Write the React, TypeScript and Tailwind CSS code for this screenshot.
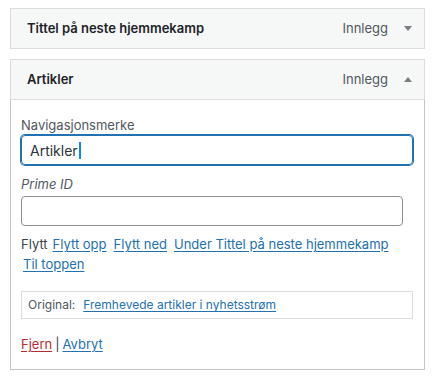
import React from "react";

const font = { fontFamily: "Inter, 'Noto Sans', sans-serif" };

const Arrow = ({ up }: { up?: boolean }) => (
  <svg width="8" height="5" viewBox="0 0 8 5" className="ml-4">
    {up ? <polygon points="0,5 8,5 4,0" fill="#787c82" /> : <polygon points="0,0 8,0 4,5" fill="#787c82" />}
  </svg>
);

const Header = ({ title, up }: { title: string; up?: boolean }) => (
  <div className="flex h-[41px] items-center border border-[#dcdcde] bg-[#f6f7f7] pl-4 pr-[12px]">
    <span className="flex-1 text-[13px] font-semibold text-[#1d2327]">{title}</span>
    <span className="text-[13px] text-[#50575e]">Innlegg</span>
    <Arrow up={up} />
  </div>
);

const A = ({ children, className = "" }: { children: React.ReactNode; className?: string }) => (
  <a href="#" className={`text-[#2271b1] underline underline-offset-2 ${className}`}>
    {children}
  </a>
);

export default function App() {
  return (
    <div className="h-[376px] w-[435px] bg-white px-[10px] pt-2" style={font}>
      <Header title="Tittel på neste hjemmekamp" />
      <div className="mt-[10px]">
        <Header title="Artikler" up />
        <div className="border-x border-b border-[#c3c4c7] px-[10px] pb-[15px] pt-[16px]">
          <label className="block text-[13px] leading-[18px] text-[#50575e]">Navigasjonsmerke</label>
          <div className="mt-[1px] flex h-[30px] w-[392px] items-center rounded-[4px] border border-[#2271b1] px-2 shadow-[0_0_0_1px_#2271b1]">
            <span className="text-[14px] text-[#2c3338]">Artikler</span>
            <span className="ml-[1px] h-[17px] w-[2px] bg-[#0a84ff]" />
          </div>
          <label className="mt-[10px] block text-[13px] italic leading-[18px] text-[#50575e]">Prime ID</label>
          <div className="mt-[3px] h-[30px] w-[382px] rounded-[4px] border border-[#8c8f94]" />
          <div className="mt-[8px] text-[13px] leading-[20px] text-[#3c434a]">
            <span className="mr-[5px]">Flytt</span>
            <A className="mr-[7px]">Flytt opp</A>
            <A className="mr-[7px]">Flytt ned</A>
            <A>Under Tittel på neste hjemmekamp</A>
            <div className="pl-[2px]">
              <A>Til toppen</A>
            </div>
          </div>
          <div className="mt-[17px] flex h-[28px] w-[392px] items-center border border-[#dcdcde] px-[6px] text-[12px] text-[#50575e]">
            <span className="mr-[8px]">Original:</span>
            <A>Fremhevede artikler i nyhetsstrøm</A>
          </div>
          <div className="mt-[15px] text-[13px] leading-[20px] text-[#3c434a]">
            <a href="#" className="text-[#b32d2e] underline underline-offset-2">Fjern</a>
            <span className="mx-[3px]">|</span>
            <A>Avbryt</A>
          </div>
        </div>
      </div>
    </div>
  );
}
